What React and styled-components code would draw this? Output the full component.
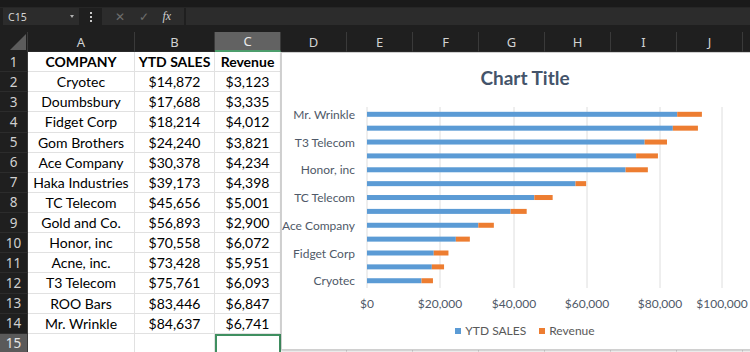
import styled, { createGlobalStyle } from 'styled-components';

const GlobalStyle = createGlobalStyle`
  html, body { margin: 0; padding: 0; background: #1f1f1f; }
  body { width: 750px; height: 352px; overflow: hidden; font-family: Lato, "Liberation Sans", sans-serif; }
`;

const data = [
  ['Cryotec', 14872, 3123],
  ['Doumbsbury', 17688, 3335],
  ['Fidget Corp', 18214, 4012],
  ['Gom Brothers', 24240, 3821],
  ['Ace Company', 30378, 4234],
  ['Haka Industries', 39173, 4398],
  ['TC Telecom', 45656, 5001],
  ['Gold and Co.', 56893, 2900],
  ['Honor, inc', 70558, 6072],
  ['Acne, inc.', 73428, 5951],
  ['T3 Telecom', 75761, 6093],
  ['ROO Bars', 83446, 6847],
  ['Mr. Wrinkle', 84637, 6741],
];

const money = (n) => '$' + n.toLocaleString('en-US');
// last column is only a sliver at the right edge, its letter isn't visible
const letters = ['A', 'B', 'C', 'D', 'E', 'F', 'G', 'H', 'I', 'J', ''];

const Page = styled.div`
  position: relative;
  width: 750px;
  height: 352px;
  overflow: hidden;
  background: #1f1f1f;
`;

const TopStrip = styled.div`
  height: 7px;
  background: #1a1a1a;
  border-bottom: 1px solid #262626;
`;

const FormulaBar = styled.div`
  display: flex;
  align-items: stretch;
  height: 17px;
  padding-left: 3px;
  gap: 2px;
`;

const NameBox = styled.div`
  width: 76px;
  display: flex;
  align-items: center;
  justify-content: space-between;
  padding: 0 5px 0 5px;
  box-sizing: border-box;
  background: #2c2c2c;
  color: #d6d6d6;
  font-family: "Noto Sans", sans-serif;
  font-size: 10.5px;
`;

const Caret = styled.span`
  width: 0;
  height: 0;
  border-left: 2.5px solid transparent;
  border-right: 2.5px solid transparent;
  border-top: 3px solid #b0b0b0;
`;

const Dots = styled.div`
  width: 19px;
  display: flex;
  flex-direction: column;
  align-items: center;
  justify-content: center;
  gap: 2px;
  span { width: 2px; height: 2px; background: #c8c8c8; }
`;

const ButtonBox = styled.div`
  width: 82px;
  display: flex;
  align-items: center;
  justify-content: space-around;
  padding: 0 6px;
  box-sizing: border-box;
  background: #2c2c2c;
  color: #6e6e6e;
  font-size: 12px;
`;

const Fx = styled.span`
  color: #d0d0d0;
  font-family: "Liberation Serif", serif;
  font-style: italic;
  font-size: 12px;
`;

const FormulaInput = styled.div`
  flex: 1;
  background: #2c2c2c;
`;

const Sheet = styled.div`
  margin-top: 7px;
  display: grid;
  grid-template-columns: 28px 107px 80px 66px repeat(7, 66px) 66px;
  grid-template-rows: 20px;
  grid-auto-rows: 20.14px;
`;

const Corner = styled.div`
  position: relative;
  background: #1f1f1f;
  border-right: 1px solid #3a3a3a;
  &::after {
    content: '';
    position: absolute;
    right: 1px;
    bottom: 2px;
    width: 16px;
    height: 16px;
    background: #5c5c5c;
    clip-path: polygon(100% 0, 100% 100%, 0 100%);
  }
`;

const ColHead = styled.div`
  display: flex;
  align-items: center;
  justify-content: center;
  box-sizing: border-box;
  background: ${(p) => (p.$active ? '#626262' : '#1f1f1f')};
  color: ${(p) => (p.$active ? '#ececec' : '#d2d2d2')};
  border-right: 1px solid #3a3a3a;
  border-bottom: ${(p) => (p.$active ? '2px solid #4c9d6c' : '1px solid #2a2a2a')};
  font-family: "Noto Sans", sans-serif;
  font-size: 13px;
`;

const RowHead = styled.div`
  display: flex;
  align-items: center;
  justify-content: center;
  box-sizing: border-box;
  background: ${(p) => (p.$active ? '#5a5a5a' : '#1f1f1f')};
  color: ${(p) => (p.$active ? '#e4e4e4' : '#d0d0d0')};
  border-bottom: 1px solid #2c2c2c;
  border-right: 1px solid #3a3a3a;
  font-family: "Noto Sans", sans-serif;
  font-size: 13.5px;
`;

const Cell = styled.div`
  display: flex;
  align-items: center;
  justify-content: center;
  box-sizing: border-box;
  background: #ffffff;
  color: #000;
  font-size: 14px;
  font-weight: ${(p) => (p.$bold ? 700 : 400)};
  white-space: nowrap;
  border-right: 1px solid #e1e1e1;
  border-bottom: 1px solid #e1e1e1;
  ${(p) => p.$selected && 'border: 2px solid #3f8f60;'}
`;

const Chart = styled.div`
  position: absolute;
  left: 281px;
  top: 52px;
  width: 488px;
  height: 298px;
  box-sizing: border-box;
  background: #fff;
  border: 1px solid #d0d0d0;
  box-shadow: 0 1px 2px rgba(0, 0, 0, 0.25);
  display: flex;
  flex-direction: column;
`;

const ChartTitle = styled.div`
  margin-top: 13px;
  text-align: center;
  font-size: 19px;
  line-height: 24px;
  font-weight: 700;
  color: #44546a;
`;

const Plot = styled.svg`
  display: block;
  margin-top: 6px;
  font-family: Lato, "Liberation Sans", sans-serif;
`;

const Legend = styled.div`
  margin-top: 7px;
  display: flex;
  justify-content: center;
  gap: 13px;
  font-size: 12px;
  line-height: 16px;
  color: #595959;
`;

const LegendItem = styled.div`
  display: flex;
  align-items: center;
  gap: 4px;
`;

const Swatch = styled.span`
  width: 6px;
  height: 6px;
  background: ${(p) => p.$color};
`;

const BLUE = '#5b9bd5';
const ORANGE = '#ed7d31';

function BarChart() {
  const x0 = 85;
  const k = 73.3 / 20000;
  const grid = [85, 158, 232, 305, 378, 440];
  const ticks = ['$0', '$20,000', '$40,000', '$60,000', '$80,000', '$100,000'];
  const bars = [...data].reverse();
  return (
    <Plot width="488" height="220" viewBox="0 0 488 220">
      {grid.map((x) => (
        <line key={x} x1={x} x2={x} y1="11" y2="192" stroke="#dedede" strokeWidth="1" />
      ))}
      {bars.map(([name, sales, rev], i) => {
        const cy = 18.3 + i * 13.87;
        const w1 = sales * k;
        const w2 = rev * k;
        return (
          <g key={name}>
            <rect x={x0} y={cy - 2.5} width={w1} height="5" fill={BLUE} />
            <rect x={x0 + w1} y={cy - 2.5} width={w2} height="5" fill={ORANGE} />
            {i % 2 === 0 && (
              <text x="73" y={cy} textAnchor="end" dominantBaseline="central" fontSize="12" fill="#4f5968">
                {name}
              </text>
            )}
          </g>
        );
      })}
      {ticks.map((t, i) => (
        <text key={t} x={grid[i]} y="207" textAnchor="middle" dominantBaseline="central" fontSize="12" fill="#4f5968">
          {t}
        </text>
      ))}
    </Plot>
  );
}

export default function App() {
  const table = [['COMPANY', 'YTD SALES', 'Revenue'], ...data.map(([n, s, r]) => [n, money(s), money(r)])];
  const extra = letters.length - 3;
  return (
    <Page>
      <GlobalStyle />
      <TopStrip />
      <FormulaBar>
        <NameBox>
          C15
          <Caret />
        </NameBox>
        <Dots><span /><span /><span /></Dots>
        <ButtonBox>
          <span>✕</span>
          <span>✓</span>
          <Fx>fx</Fx>
        </ButtonBox>
        <FormulaInput />
      </FormulaBar>
      <Sheet>
        <Corner />
        {letters.map((l, i) => (
          <ColHead key={'c' + i} $active={l === 'C'}>{l}</ColHead>
        ))}
        {table.map((row, r) => (
          <>
            <RowHead key={'h' + r}>{r + 1}</RowHead>
            {row.map((v, c) => (
              <Cell key={r + '-' + c} $bold={r === 0}>{v}</Cell>
            ))}
            {Array.from({ length: extra }).map((_, c) => (
              <Cell key={r + 'e' + c} />
            ))}
          </>
        ))}
        <RowHead $active>15</RowHead>
        {letters.map((l, i) => (
          <Cell key={'15-' + i} $selected={l === 'C'} />
        ))}
      </Sheet>
      <Chart>
        <ChartTitle>Chart Title</ChartTitle>
        <BarChart />
        <Legend>
          <LegendItem><Swatch $color={BLUE} />YTD SALES</LegendItem>
          <LegendItem><Swatch $color={ORANGE} />Revenue</LegendItem>
        </Legend>
      </Chart>
    </Page>
  );
}
